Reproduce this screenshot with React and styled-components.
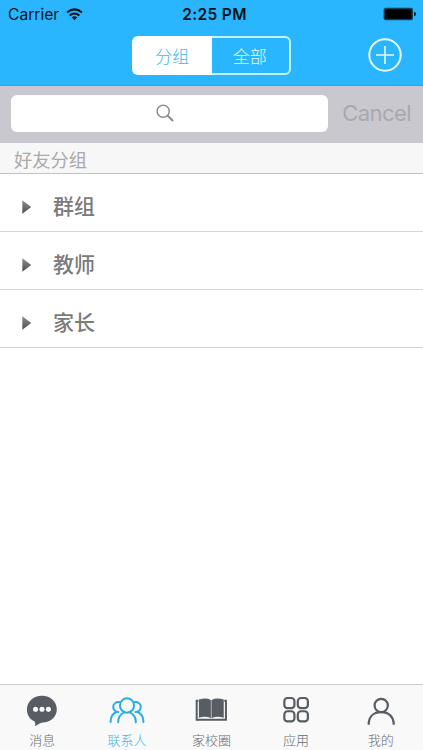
import styled, { createGlobalStyle } from "styled-components";

const GlobalStyle = createGlobalStyle`
  * {
    box-sizing: border-box;
  }
  body {
    margin: 0;
    background: #ffffff;
    font-family: Inter, "Noto Sans CJK SC", sans-serif;
  }
`;

const Screen = styled.div`
  width: 423px;
  height: 750px;
  display: flex;
  flex-direction: column;
  background: #ffffff;
  overflow: hidden;
`;

const Header = styled.header`
  height: 86px;
  flex: none;
  background: #29b6ff;
  border-bottom: 1px solid #539ebf;
`;

const StatusBar = styled.div`
  height: 28px;
  padding: 0 7px 0 8px;
  display: grid;
  grid-template-columns: 1fr auto 1fr;
  align-items: center;
  color: #07151d;
  font-size: 15.6px;
`;

const Carrier = styled.div`
  display: flex;
  align-items: center;
  gap: 7px;
`;

const Clock = styled.div`
  padding-left: 5px;
  font-weight: 600;
  font-size: 15.5px;
  letter-spacing: 0.35px;
  color: #06121a;
`;

const Battery = styled.svg`
  justify-self: end;
`;

const NavBar = styled.div`
  height: 57px;
  padding: 8px 21px 0 132px;
  display: flex;
  align-items: flex-start;
  justify-content: space-between;
`;

const Segmented = styled.div`
  width: 159px;
  height: 39px;
  display: flex;
`;

const Segment = styled.button`
  flex: 1;
  margin: 0;
  padding: 0 1px 1px 0;
  border: 2px solid ${(p) => (p.$active ? "#ffffff" : "#c5f0ff")};
  border-left-width: ${(p) => (p.$active ? "2px" : "0")};
  border-right-width: ${(p) => (p.$active ? "0" : "2px")};
  border-radius: ${(p) => (p.$active ? "6px 0 0 6px" : "0 6px 6px 0")};
  background: ${(p) => (p.$active ? "#ffffff" : "transparent")};
  color: ${(p) => (p.$active ? "#43b4ec" : "#e4f9ff")};
  font-family: "Noto Sans CJK SC", sans-serif;
  font-size: 17px;
  font-weight: 300;
`;

const AddButton = styled.button`
  margin: 2px 0 0;
  padding: 0;
  border: 0;
  background: transparent;
  line-height: 0;
`;

const SearchBar = styled.div`
  height: 57px;
  flex: none;
  padding: 0 12px 3px 11px;
  display: flex;
  align-items: center;
  justify-content: space-between;
  background: #c9c8cf;
`;

const SearchField = styled.div`
  width: 317px;
  height: 37px;
  padding-right: 10px;
  display: flex;
  align-items: center;
  justify-content: center;
  background: #ffffff;
  border-radius: 6px;
`;

const Cancel = styled.span`
  margin-top: -1px;
  color: #a8a8ae;
  font-size: 22.1px;
  letter-spacing: -0.6px;
`;

const SectionTitle = styled.div`
  height: 31px;
  flex: none;
  padding: 2px 0 0 14px;
  background: #f7f7f7;
  border-bottom: 1px solid #c2c2c4;
  color: #a9a9a9;
  font-family: "Noto Sans CJK SC", sans-serif;
  font-size: 18.3px;
  line-height: 29px;
`;

const Row = styled.div`
  height: 58px;
  flex: none;
  padding: 8px 0 0 22px;
  display: flex;
  align-items: center;
  gap: 21px;
  border-bottom: 1px solid #d6d6d6;
  color: #7b7b7b;
  font-family: "Noto Sans CJK SC", sans-serif;
  font-size: 21px;
  font-weight: 500;
`;

const RowLabel = styled.span`
  line-height: 30px;
  margin-top: -3px;
`;

const TabBar = styled.nav`
  height: 66px;
  margin-top: auto;
  flex: none;
  display: flex;
  background: #f9f9f9;
  border-top: 1px solid #c9c9c9;
`;

const Tab = styled.div`
  flex: 1;
  padding-top: 7px;
  display: flex;
  flex-direction: column;
  align-items: center;
  color: ${(p) => (p.$active ? "#29aee0" : "#575d62")};
`;

const TabLabel = styled.span`
  margin-top: -2px;
  color: ${(p) => (p.$active ? "#45b5e4" : "#686c70")};
  font-family: "Noto Sans CJK SC", sans-serif;
  font-size: 13px;
  font-weight: 300;
  line-height: 20px;
`;

const WifiIcon = () => (
  <svg width="17" height="13" viewBox="0 0 17 13" fill="none" stroke="currentColor" strokeWidth="2">
    <path d="M1 4.5Q8.5-1.7 16 4.5M3.6 7.5Q8.5 3.5 13.4 7.5" />
    <path d="M5.7 9.2Q8.5 7.2 11.3 9.2L8.5 12.2Z" fill="currentColor" stroke="none" />
  </svg>
);

const BatteryIcon = () => (
  <Battery width="33" height="14" viewBox="0 0 33 14">
    <rect x="0.6" y="0.8" width="29.4" height="12.4" rx="2" fill="#0d4258" />
    <rect x="2" y="2.2" width="26.6" height="9.6" rx="0.8" fill="#000000" />
    <path d="M31 4.7q2 .6 2 2.3t-2 2.3z" fill="#06212e" />
  </Battery>
);

const PlusIcon = () => (
  <svg width="34" height="34" viewBox="0 0 34 34" fill="none" stroke="#e6fbff">
    <circle cx="17" cy="17" r="15.7" strokeWidth="2" />
    <path d="M17 8v18M8 17h18" strokeWidth="1.6" />
  </svg>
);

const SearchIcon = () => (
  <svg width="18" height="18" viewBox="0 0 18 18" fill="none" stroke="#87878c">
    <circle cx="7.2" cy="7.2" r="6.1" strokeWidth="1.4" />
    <path d="M11.6 11.6L17 17" strokeWidth="2" />
  </svg>
);

const Arrow = () => (
  <svg width="10" height="14" viewBox="0 0 10 14">
    <defs>
      <linearGradient id="arrow" x1="0" y1="0" x2="0" y2="1">
        <stop offset="0" stopColor="#8f8f8f" />
        <stop offset="1" stopColor="#4d4d4d" />
      </linearGradient>
    </defs>
    <path d="M0.3 0.3L9.3 7L0.3 13.7Z" fill="url(#arrow)" />
  </svg>
);

const MessageIcon = () => (
  <svg width="42" height="42" viewBox="0 0 38 38">
    <path
      d="M19 3.5C27.1 3.5 33.1 9.2 33.1 16.5S27.1 29 19.5 29C17.4 29.2 15.2 31 12.4 32.6C12.8 30.8 12.6 29.4 12 28C7.4 26.2 4.7 21.8 4.7 16.5C4.7 9.2 10.7 3.5 19 3.5Z"
      fill="currentColor"
    />
    <g fill="#ffffff">
      <circle cx="12.9" cy="16.5" r="2.4" />
      <circle cx="19" cy="16.5" r="2.4" />
      <circle cx="25.1" cy="16.5" r="2.4" />
    </g>
  </svg>
);

const ContactsIcon = () => (
  <svg width="42" height="42" viewBox="0 0 38 38" fill="none" stroke="currentColor" strokeWidth="1.9" strokeLinecap="round">
    <ellipse cx="19" cy="12.8" rx="6.7" ry="6.8" />
    <path d="M10.6 28.7C10.6 23.5 13 21 16.2 19.4M27.4 28.7C27.4 23.5 25 21 21.8 19.4" />
    <path d="M12.4 9.8C8.7 8.8 5.9 11.2 5.9 14C5.9 16.6 7.8 18.7 10.8 19.1M25.6 9.8C29.3 8.8 32.1 11.2 32.1 14C32.1 16.6 30.2 18.7 27.2 19.1" />
    <path d="M8.9 19C5.2 20.6 3.4 24 3.4 28.4M29.1 19C32.8 20.6 34.6 24 34.6 28.4" />
  </svg>
);

const BookIcon = () => (
  <svg width="42" height="42" viewBox="0 0 38 38">
    <path d="M7 8.2H5.4V26.3H33.2V8.2H31.6" fill="none" stroke="currentColor" strokeWidth="1.9" />
    <path d="M7.5 7.2Q14.5 5 18.9 7.6V24.6Q13.5 22.6 7.5 24.4ZM31.1 7.2Q24.1 5 19.7 7.6V24.6Q25.1 22.6 31.1 24.4Z" fill="currentColor" />
    <path d="M19.3 7.8V24.8" stroke="#84888b" strokeWidth="0.8" />
  </svg>
);

const AppsIcon = () => (
  <svg width="42" height="42" viewBox="0 0 38 38" fill="none" stroke="currentColor" strokeWidth="2.1">
    <rect x="7.9" y="5.7" width="9.6" height="9.7" rx="3" />
    <rect x="20.7" y="5.7" width="9.6" height="9.7" rx="3" />
    <rect x="7.9" y="18.3" width="9.6" height="9.7" rx="3" />
    <rect x="20.7" y="18.3" width="9.6" height="9.7" rx="3" />
  </svg>
);

const ProfileIcon = () => (
  <svg width="42" height="42" viewBox="0 0 38 38" fill="none" stroke="currentColor" strokeWidth="2.1">
    <circle cx="19.2" cy="12.8" r="6.3" />
    <path d="M7.3 31C7.3 23.2 12.3 19.2 19.2 19.2S31.1 23.2 31.1 31" />
  </svg>
);

const groups = ["群组", "教师", "家长"];

const tabs = [
  { label: "消息", Icon: MessageIcon },
  { label: "联系人", Icon: ContactsIcon, active: true },
  { label: "家校圈", Icon: BookIcon },
  { label: "应用", Icon: AppsIcon },
  { label: "我的", Icon: ProfileIcon },
];

const App = () => {
  return (
    <>
      <GlobalStyle />
      <Screen>
        <Header>
          <StatusBar>
            <Carrier>
              Carrier
              <WifiIcon />
            </Carrier>
            <Clock>2:25 PM</Clock>
            <BatteryIcon />
          </StatusBar>
          <NavBar>
            <Segmented>
              <Segment $active>分组</Segment>
              <Segment>全部</Segment>
            </Segmented>
            <AddButton aria-label="add">
              <PlusIcon />
            </AddButton>
          </NavBar>
        </Header>
        <SearchBar>
          <SearchField>
            <SearchIcon />
          </SearchField>
          <Cancel>Cancel</Cancel>
        </SearchBar>
        <SectionTitle>好友分组</SectionTitle>
        {groups.map((name) => (
          <Row key={name}>
            <Arrow />
            <RowLabel>{name}</RowLabel>
          </Row>
        ))}
        <TabBar>
          {tabs.map(({ label, Icon, active }) => (
            <Tab key={label} $active={active}>
              <Icon />
              <TabLabel $active={active}>{label}</TabLabel>
            </Tab>
          ))}
        </TabBar>
      </Screen>
    </>
  );
};

export default App;
